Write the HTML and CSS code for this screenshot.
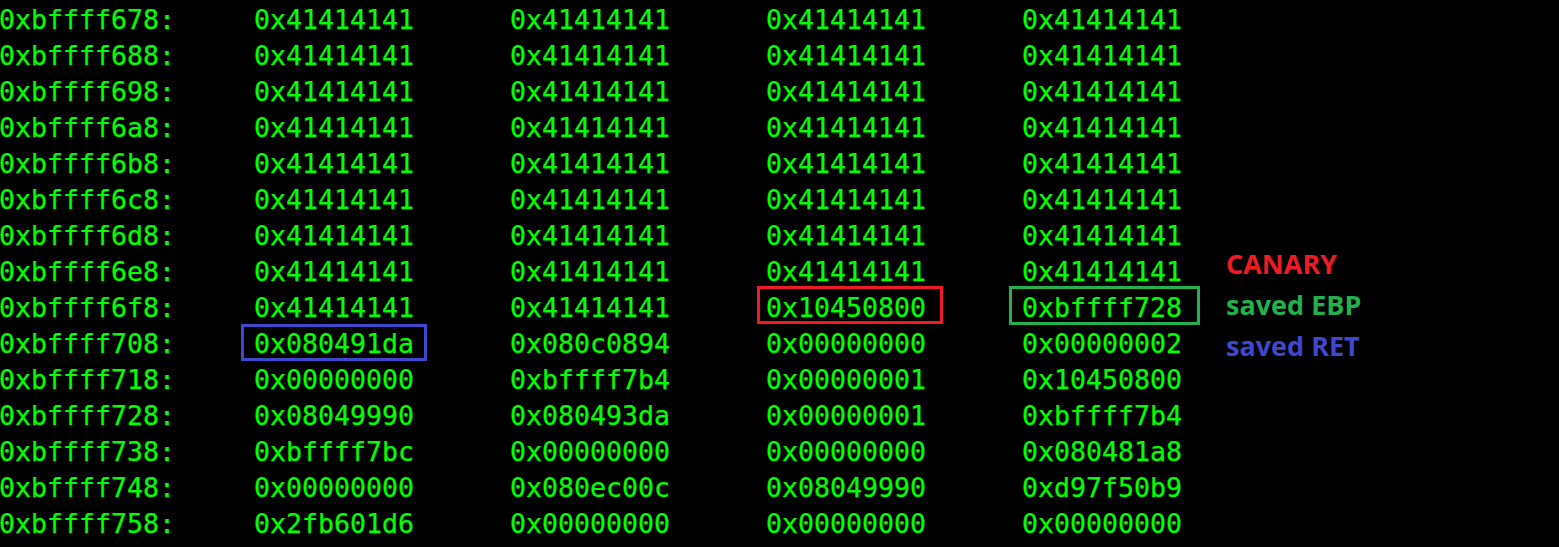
FILE: index.html
```html
<!DOCTYPE html>
<html>
<head>
<meta charset="utf-8">
<link rel="stylesheet" href="styles.css">
</head>
<body>
<div class="screen">
  <div class="dump">
    <div class="row"><span class="addr">0xbffff678:</span><span class="w">0x41414141</span><span class="w">0x41414141</span><span class="w">0x41414141</span><span class="w">0x41414141</span></div>
    <div class="row"><span class="addr">0xbffff688:</span><span class="w">0x41414141</span><span class="w">0x41414141</span><span class="w">0x41414141</span><span class="w">0x41414141</span></div>
    <div class="row"><span class="addr">0xbffff698:</span><span class="w">0x41414141</span><span class="w">0x41414141</span><span class="w">0x41414141</span><span class="w">0x41414141</span></div>
    <div class="row"><span class="addr">0xbffff6a8:</span><span class="w">0x41414141</span><span class="w">0x41414141</span><span class="w">0x41414141</span><span class="w">0x41414141</span></div>
    <div class="row"><span class="addr">0xbffff6b8:</span><span class="w">0x41414141</span><span class="w">0x41414141</span><span class="w">0x41414141</span><span class="w">0x41414141</span></div>
    <div class="row"><span class="addr">0xbffff6c8:</span><span class="w">0x41414141</span><span class="w">0x41414141</span><span class="w">0x41414141</span><span class="w">0x41414141</span></div>
    <div class="row"><span class="addr">0xbffff6d8:</span><span class="w">0x41414141</span><span class="w">0x41414141</span><span class="w">0x41414141</span><span class="w">0x41414141</span></div>
    <div class="row"><span class="addr">0xbffff6e8:</span><span class="w">0x41414141</span><span class="w">0x41414141</span><span class="w">0x41414141</span><span class="w">0x41414141</span></div>
    <div class="row"><span class="addr">0xbffff6f8:</span><span class="w">0x41414141</span><span class="w">0x41414141</span><span class="w boxed canary">0x10450800</span><span class="w boxed ebp">0xbffff728</span></div>
    <div class="row"><span class="addr">0xbffff708:</span><span class="w boxed ret">0x080491da</span><span class="w">0x080c0894</span><span class="w">0x00000000</span><span class="w">0x00000002</span></div>
    <div class="row"><span class="addr">0xbffff718:</span><span class="w">0x00000000</span><span class="w">0xbffff7b4</span><span class="w">0x00000001</span><span class="w">0x10450800</span></div>
    <div class="row"><span class="addr">0xbffff728:</span><span class="w">0x08049990</span><span class="w">0x080493da</span><span class="w">0x00000001</span><span class="w">0xbffff7b4</span></div>
    <div class="row"><span class="addr">0xbffff738:</span><span class="w">0xbffff7bc</span><span class="w">0x00000000</span><span class="w">0x00000000</span><span class="w">0x080481a8</span></div>
    <div class="row"><span class="addr">0xbffff748:</span><span class="w">0x00000000</span><span class="w">0x080ec00c</span><span class="w">0x08049990</span><span class="w">0xd97f50b9</span></div>
    <div class="row"><span class="addr">0xbffff758:</span><span class="w">0x2fb601d6</span><span class="w">0x00000000</span><span class="w">0x00000000</span><span class="w">0x00000000</span></div>
  </div>
  <div class="legend">
    <div class="label l-canary">CANARY</div>
    <div class="label l-ebp">saved EBP</div>
    <div class="label l-ret">saved RET</div>
  </div>
</div>
</body>
</html>
```

FILE: styles.css
```css
html, body {
  margin: 0;
  padding: 0;
  background: #000;
}
.screen {
  position: relative;
  width: 1559px;
  height: 547px;
  overflow: hidden;
  background: #000;
}
.dump {
  padding-top: 2px;
  font-family: "DejaVu Sans Mono", "Liberation Mono", monospace;
  font-size: 26.6px;
  color: #00ff00;
  -webkit-text-stroke: 0.25px #00ff00;
}
.row {
  display: grid;
  grid-template-columns: 254px 256px 256px 256px 256px;
  height: 36px;
  line-height: 36px;
  white-space: pre;
}
.addr {
  margin-left: -1px;
}
.w {
  position: relative;
}
.boxed::after {
  content: "";
  position: absolute;
  box-sizing: border-box;
  border: 3px solid;
}
.ret::after {
  left: -13px;
  width: 186px;
  top: -2px;
  height: 37px;
  border-color: #3f48cc;
}
.canary::after {
  left: -9px;
  width: 186px;
  top: -4px;
  height: 38px;
  border-color: #ed1c24;
}
.ebp::after {
  left: -13px;
  width: 191px;
  top: -4px;
  height: 39px;
  border-color: #22b14c;
}
.legend {
  position: absolute;
  left: 1226px;
  top: 243px;
  display: flex;
  flex-direction: column;
  font-family: "Open Sans", "Noto Sans", sans-serif;
  font-weight: 700;
  font-size: 27px;
  line-height: 41px;
}
.l-canary { color: #ed1c24; }
.l-ebp { color: #22b14c; }
.l-ret { color: #3f48cc; }
```
